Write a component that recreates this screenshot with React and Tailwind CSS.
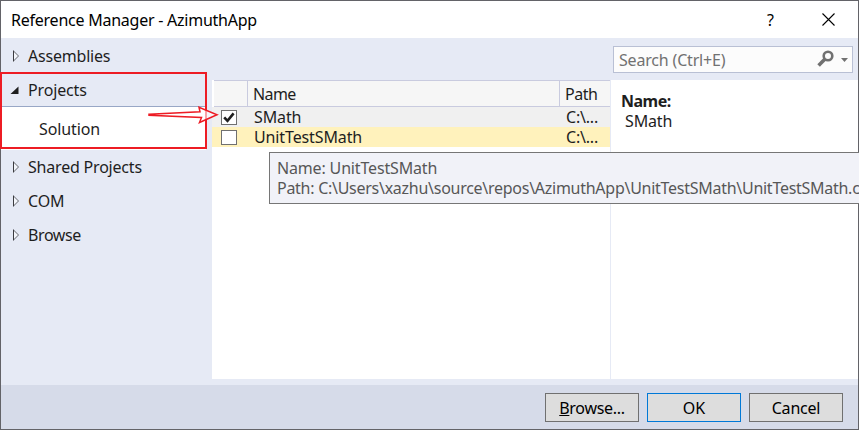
const FONT = "font-['Noto_Sans','Open_Sans',sans-serif]";

function Collapsed() {
  return (
    <svg className="w-[9px] h-3 shrink-0" viewBox="0 0 9 12">
      <path d="M1.5 1V11L6.5 6Z" fill="#f4f6fb" stroke="#66676d" strokeWidth="1" />
      <path d="M1.5 0.5V11.5" stroke="#3c3c40" strokeWidth="1" />
    </svg>
  );
}

function NavItem({ label, tracking }) {
  return (
    <div className="flex h-[34px] items-center pl-[11px]">
      <Collapsed />
      <span className={`ml-[7px] ${tracking}`}>{label}</span>
    </div>
  );
}

function Sidebar() {
  return (
    <nav className="w-[211px] shrink-0 pt-px text-[#1e1e1e]">
      <NavItem label="Assemblies" tracking="tracking-[-0.2px]" />
      <div className="w-[205px]">
        <div className="flex h-[34px] items-center border border-[#98a7c6] pl-[8px]">
          <svg className="h-[9px] w-[9px] shrink-0" viewBox="0 0 9 9">
            <path d="M8.5 0.5V8H0.5Z" fill="#1e1e1e" />
          </svg>
          <span className="ml-[9px] tracking-[-0.15px]">Projects</span>
        </div>
        <div className="flex h-[43px] items-center bg-white pl-[38px]">
          <span className="tracking-[-0.1px]">Solution</span>
        </div>
      </div>
      <NavItem label="Shared Projects" tracking="tracking-[-0.2px]" />
      <NavItem label="COM" tracking="tracking-[-0.1px]" />
      <NavItem label="Browse" tracking="tracking-[-0.4px]" />
    </nav>
  );
}

function Row({ name, checked, className }) {
  return (
    <div className={`flex items-center ${className}`}>
      <div className="flex w-[42px] shrink-0 pl-[9px]">
        <span className="flex h-[15px] w-4 border border-[#707070] bg-white">
          {checked && (
            <svg className="h-[13px] w-[14px]" viewBox="0 0 14 13">
              <path d="M2.2 6.3L5.5 9.8L11.6 2.4" fill="none" stroke="#1e1e1e" strokeWidth="2.6" />
            </svg>
          )}
        </span>
      </div>
      <span className="w-[312px] tracking-[-0.12px]">{name}</span>
      <span className="tracking-[-0.2px]">C:\...</span>
    </div>
  );
}

function ProjectList() {
  return (
    <main className="mt-[42px] h-[299px] w-[398px] shrink-0 bg-white text-[#1e1e1e]">
      <div className="ml-0.5 flex h-[27px] items-center border-y border-[#c9cbdf] bg-[#f6f6f6]">
        <div className="h-full w-[34px] border-r border-[#c9cbdf]" />
        <div className="flex h-full w-[312px] items-center border-r border-[#c9cbdf] pl-[5px] tracking-[-0.6px]">Name</div>
        <div className="pl-[5px] tracking-[-0.5px]">Path</div>
      </div>
      <Row name="SMath" checked className="h-5 bg-[#f0f0f0]" />
      <Row name="UnitTestSMath" className="h-5 bg-[#fff2bc]" />
    </main>
  );
}

function Details() {
  return (
    <aside className="ml-px flex-1">
      <div className="ml-0.5 mt-2 flex h-[27px] w-60 items-center border border-[#b9c0d4] bg-[#fcfcfc] pl-[5px] text-[#717171]">
        <span className="flex-1 tracking-[-0.18px]">Search (Ctrl+E)</span>
        <svg className="mb-0.5 h-[17px] w-[17px]" viewBox="0 0 17 17">
          <circle cx="11" cy="6" r="4.3" fill="none" stroke="#717171" strokeWidth="2.6" />
          <path d="M8 9L1.6 15.4" stroke="#717171" strokeWidth="3.6" />
        </svg>
        <svg className="ml-[7px] mr-1 h-1 w-[7px]" viewBox="0 0 7 4">
          <path d="M0 0H7L3.5 4Z" fill="#717171" />
        </svg>
      </div>
      <div className="mt-[7px] h-[299px] bg-white pl-2.5 pt-[11px] leading-5 text-[#1e1e1e]">
        <div className="font-bold tracking-[-0.5px]">Name:</div>
        <div className="pl-1 tracking-[-0.15px]">SMath</div>
      </div>
    </aside>
  );
}

function Button({ children, className }) {
  return (
    <button className={`h-[29px] w-[94px] border bg-[#dddddd] leading-5 ${className}`}>{children}</button>
  );
}

export default function App() {
  return (
    <div className={`relative h-[430px] w-[859px] overflow-hidden text-[16px] leading-5 whitespace-nowrap ${FONT}`}>
      <div className="h-[430px] w-[859px] border border-[#636368] bg-[#e6eaf5]">
        <header className="flex h-[37px] items-center bg-white text-black">
          <h1 className="flex-1 pl-2.5 tracking-[-0.24px]">Reference Manager - AzimuthApp</h1>
          <span className="mr-[48px]">?</span>
          <svg className="mr-[23px] h-[13px] w-[13px]" viewBox="0 0 13 13">
            <path d="M0.5 0.5L12.5 12.5M12.5 0.5L0.5 12.5" stroke="#000" strokeWidth="1.1" />
          </svg>
        </header>
        <div className="flex h-[347px]">
          <Sidebar />
          <ProjectList />
          <Details />
        </div>
        <footer className="flex h-[44px] items-start justify-end gap-2 bg-[#d6dbe9] pr-[15px] pt-2 text-black">
          <Button className="border-[#707070] tracking-[-0.3px]"><span className="underline">B</span>rowse...</Button>
          <Button className="border-[#0078d7]">OK</Button>
          <Button className="border-[#707070] tracking-[-0.2px]">Cancel</Button>
        </footer>
      </div>
      <div className="absolute left-[269px] top-[152px] h-[52px] w-[590px] border border-r-0 border-[#767676] bg-[#f1f2f8] pl-[7px] pt-[5px] text-[#575757]">
        <div className="tracking-[-0.16px]">Name: UnitTestSMath</div>
        <div className="tracking-[-0.27px]">Path: C:\Users\xazhu\source\repos\AzimuthApp\UnitTestSMath\UnitTestSMath.c</div>
      </div>
      <div className="absolute left-0 top-[72px] h-[77px] w-[207px] border-2 border-[#ed1c24]" />
      <svg className="absolute left-[147px] top-[105px] h-5 w-[74px]" viewBox="0 0 74 20">
        <path d="M2 9.2L53 6.8L52 2.2L70 9.8L52.5 17.5L54.5 12.5L2 10.2Z" fill="#fff" fillOpacity="0.6" stroke="#ed1c24" strokeWidth="1.5" />
      </svg>
    </div>
  );
}
